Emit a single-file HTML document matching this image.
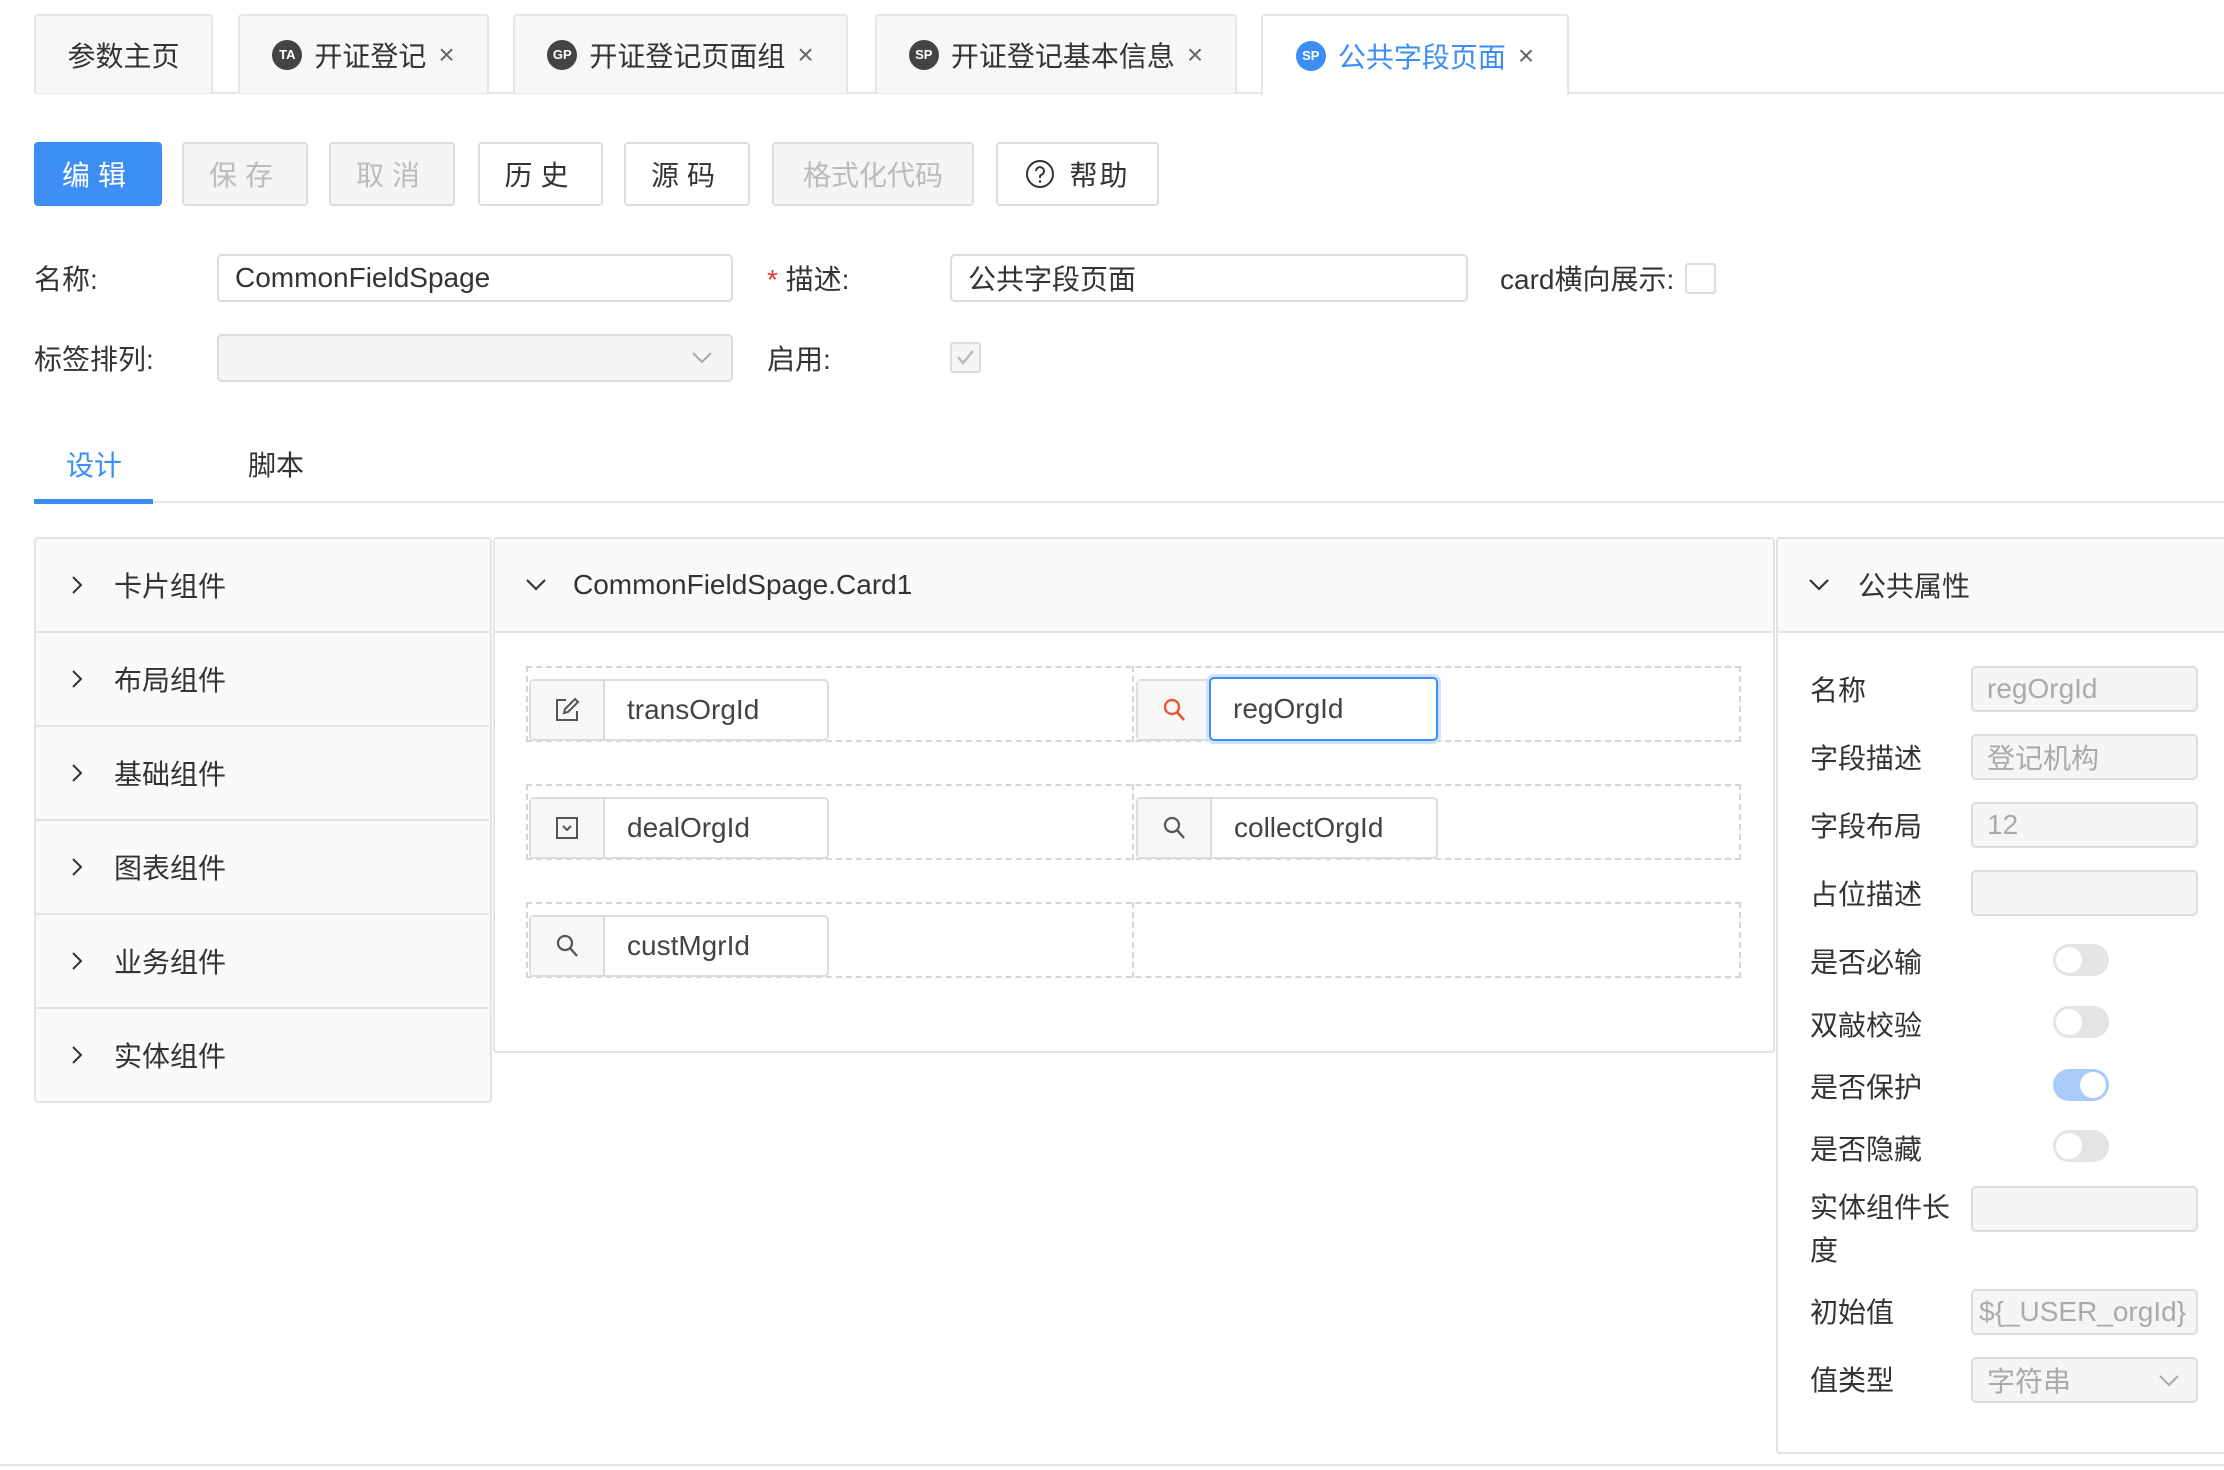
<!DOCTYPE html>
<html><head><meta charset="utf-8"><style>
*{box-sizing:border-box;margin:0;padding:0}
body{width:2224px;height:1470px;background:#fff;position:relative;overflow:hidden;font-family:"Liberation Sans","Noto Sans CJK SC",sans-serif;color:#333;font-size:28px}
.a{position:absolute}
.tab{position:absolute;top:14px;height:79px;border:2px solid #e6e6e6;border-bottom:none;background:#f7f7f7;border-radius:4px 4px 0 0;display:flex;align-items:center;justify-content:center;gap:12px;color:#333;font-size:28px}
.tab.on{background:#fff;color:#3a8ef6;height:81px}
.ic{width:30px;height:30px;border-radius:50%;background:#444;color:#fff;font-size:13px;font-weight:bold;display:flex;align-items:center;justify-content:center}
.x{color:#666;font-size:28px;font-weight:300}
.btn{position:absolute;top:142px;height:64px;border:2px solid #dcdcdc;border-radius:4px;background:#fff;display:flex;align-items:center;justify-content:center;font-size:28px;letter-spacing:8px;color:#333}
.btn.dis{background:#f5f5f5;color:#bbb}
.inp{position:absolute;border:2px solid #dcdcdc;border-radius:5px;background:#fff;display:flex;align-items:center;padding-left:16px;font-size:28px;color:#333}
.lbl{position:absolute;font-size:28px;color:#333}
.lrow{position:absolute;left:36px;width:453px;height:94px;border-bottom:2px solid #e3e3e3;background:#fafafa;display:flex;align-items:center;padding-left:34px;font-size:28px}
.lrow svg{margin-right:30px}
.dash{position:absolute;border:2px dashed #d6d6d6}
.grp{position:absolute;height:62px;border:2px solid #dcdcdc;border-radius:5px;background:#fff;display:flex;align-items:center}
.grp .ad{width:74px;height:100%;background:#f7f7f7;border-right:2px solid #dcdcdc;display:flex;align-items:center;justify-content:center}
.grp .t{padding-left:22px;font-size:28px;color:#444}
.rl{position:absolute;left:1810px;font-size:28px;color:#333}
.ri{position:absolute;left:1971px;width:227px;height:46px;border:2px solid #dcdcdc;border-radius:5px;background:#f5f5f5;color:#aaa;font-size:28px;display:flex;align-items:center;padding-left:14px;overflow:hidden;white-space:nowrap}
.tg{position:absolute;left:2053px;width:56px;height:32px;border-radius:16px;background:#e4e4e4}
.tg::after{content:"";position:absolute;left:3px;top:3px;width:26px;height:26px;border-radius:50%;background:#fff}
.tg.on{background:#a9cbf7}
.tg.on::after{left:27px}
</style></head><body>
<div class="a" style="left:34px;top:92px;width:2190px;height:2px;background:#e6e6e6"></div>
<div class="tab" style="left:34px;width:179px">参数主页</div>
<div class="tab" style="left:238px;width:251px"><span class="ic">TA</span>开证登记<span class="x">×</span></div>
<div class="tab" style="left:513px;width:335px"><span class="ic">GP</span>开证登记页面组<span class="x">×</span></div>
<div class="tab" style="left:875px;width:362px"><span class="ic">SP</span>开证登记基本信息<span class="x">×</span></div>
<div class="tab on" style="left:1261px;width:308px"><span class="ic" style="background:#3a8ef6">SP</span>公共字段页面<span class="x">×</span></div>

<div class="btn" style="left:34px;width:128px;background:#3e8ff5;border-color:#3e8ff5;color:#fff">编辑</div>
<div class="btn dis" style="left:182px;width:126px">保存</div>
<div class="btn dis" style="left:329px;width:126px">取消</div>
<div class="btn" style="left:478px;width:125px">历史</div>
<div class="btn" style="left:624px;width:126px">源码</div>
<div class="btn dis" style="left:772px;width:202px;letter-spacing:0">格式化代码</div>
<div class="btn" style="left:996px;width:163px;letter-spacing:2px"><svg width="30" height="30" viewBox="0 0 30 30" style="margin-right:14px"><circle cx="15" cy="15" r="13" fill="none" stroke="#333" stroke-width="2"/><path d="M11 12a4 4 0 1 1 5 4c-1 .5-1 1-1 3" fill="none" stroke="#333" stroke-width="2"/><circle cx="15" cy="22.5" r="1.3" fill="#333"/></svg>帮助</div>

<div class="lbl" style="left:34px;top:258px">名称:</div>
<div class="inp" style="left:217px;top:254px;width:516px;height:48px">CommonFieldSpage</div>
<div class="lbl" style="left:767px;top:258px"><span style="color:#e33">*</span> 描述:</div>
<div class="inp" style="left:950px;top:254px;width:518px;height:48px">公共字段页面</div>
<div class="lbl" style="left:1500px;top:258px">card横向展示:</div>
<div class="a" style="left:1685px;top:263px;width:31px;height:31px;border:2px solid #dcdcdc;border-radius:3px"></div>
<div class="lbl" style="left:34px;top:338px">标签排列:</div>
<div class="inp" style="left:217px;top:334px;width:516px;height:48px;background:#f5f5f5"><svg class="a" style="right:18px;top:14px" width="22" height="16" viewBox="0 0 22 16"><path d="M2 3l9 9 9-9" fill="none" stroke="#aaa" stroke-width="2"/></svg></div>
<div class="lbl" style="left:767px;top:338px">启用:</div>
<div class="a" style="left:950px;top:342px;width:31px;height:31px;border:2px solid #dcdcdc;border-radius:3px;background:#f5f5f5"><svg width="27" height="27" viewBox="0 0 27 27"><path d="M6 13l5 6 10-12" fill="none" stroke="#bbb" stroke-width="2.5"/></svg></div>

<div class="a" style="left:66px;top:444px;font-size:28px;color:#3a8ef6">设计</div>
<div class="a" style="left:248px;top:444px;font-size:28px;color:#333">脚本</div>
<div class="a" style="left:34px;top:501px;width:2190px;height:2px;background:#e6e6e6"></div>
<div class="a" style="left:34px;top:499px;width:119px;height:5px;background:#3a8ef6"></div>

<!-- left panel -->
<div class="a" style="left:34px;top:537px;width:458px;height:566px;border:2px solid #e3e3e3;border-radius:4px;background:#fafafa"></div>
<div class="lrow" style="top:539px"><svg width="14" height="24" viewBox="0 0 14 24"><path d="M3 4l8 8-8 8" fill="none" stroke="#333" stroke-width="2"/></svg>卡片组件</div>
<div class="lrow" style="top:633px"><svg width="14" height="24" viewBox="0 0 14 24"><path d="M3 4l8 8-8 8" fill="none" stroke="#333" stroke-width="2"/></svg>布局组件</div>
<div class="lrow" style="top:727px"><svg width="14" height="24" viewBox="0 0 14 24"><path d="M3 4l8 8-8 8" fill="none" stroke="#333" stroke-width="2"/></svg>基础组件</div>
<div class="lrow" style="top:821px"><svg width="14" height="24" viewBox="0 0 14 24"><path d="M3 4l8 8-8 8" fill="none" stroke="#333" stroke-width="2"/></svg>图表组件</div>
<div class="lrow" style="top:915px"><svg width="14" height="24" viewBox="0 0 14 24"><path d="M3 4l8 8-8 8" fill="none" stroke="#333" stroke-width="2"/></svg>业务组件</div>
<div class="lrow" style="top:1009px;border-bottom:none;height:92px"><svg width="14" height="24" viewBox="0 0 14 24"><path d="M3 4l8 8-8 8" fill="none" stroke="#333" stroke-width="2"/></svg>实体组件</div>

<!-- center panel -->
<div class="a" style="left:493px;top:537px;width:1282px;height:516px;border:2px solid #e3e3e3;border-radius:4px;background:#fff"></div>
<div class="a" style="left:495px;top:539px;width:1278px;height:94px;background:#fafafa;border-bottom:2px solid #e3e3e3;display:flex;align-items:center;padding-left:30px;font-size:28px"><svg width="22" height="16" viewBox="0 0 22 16" style="margin-right:26px"><path d="M2 3l9 9 9-9" fill="none" stroke="#333" stroke-width="2.2"/></svg>CommonFieldSpage.Card1</div>
<div class="dash" style="left:526px;top:666px;width:1215px;height:76px"></div>
<div class="dash" style="left:526px;top:784px;width:1215px;height:76px"></div>
<div class="dash" style="left:526px;top:902px;width:1215px;height:76px"></div>
<div class="a" style="left:1132px;top:666px;height:76px;border-left:2px dashed #d6d6d6"></div>
<div class="a" style="left:1132px;top:784px;height:76px;border-left:2px dashed #d6d6d6"></div>
<div class="a" style="left:1132px;top:902px;height:76px;border-left:2px dashed #d6d6d6"></div>

<div class="grp" style="left:529px;top:679px;width:300px"><div class="ad"><svg width="28" height="28" viewBox="0 0 28 28"><path d="M13 4H4v20h20v-9" fill="none" stroke="#555" stroke-width="2"/><path d="M11 17l1-4 10-10 3 3-10 10z" fill="none" stroke="#555" stroke-width="2"/></svg></div><span class="t">transOrgId</span></div>
<div class="grp" style="left:1136px;top:679px;width:302px"><div class="ad"><svg width="28" height="28" viewBox="0 0 28 28"><circle cx="12" cy="11" r="7" fill="none" stroke="#e53" stroke-width="2.4"/><path d="M17 16l7 8" stroke="#e53" stroke-width="2.6"/></svg></div></div>
<div class="a" style="left:1209px;top:677px;width:229px;height:64px;border:2px solid #3a8ef6;border-radius:5px;box-shadow:0 0 0 3px #cfe2fc;background:#fff;display:flex;align-items:center;padding-left:22px;font-size:28px;color:#444">regOrgId</div>
<div class="grp" style="left:529px;top:797px;width:300px"><div class="ad"><svg width="28" height="28" viewBox="0 0 28 28"><rect x="4" y="4" width="20" height="20" fill="none" stroke="#555" stroke-width="2"/><path d="M10 12l4 4 4-4" fill="none" stroke="#555" stroke-width="2"/></svg></div><span class="t">dealOrgId</span></div>
<div class="grp" style="left:1136px;top:797px;width:302px"><div class="ad"><svg width="28" height="28" viewBox="0 0 28 28"><circle cx="12" cy="11" r="7" fill="none" stroke="#555" stroke-width="2.2"/><path d="M17 16l7 8" stroke="#555" stroke-width="2.4"/></svg></div><span class="t">collectOrgId</span></div>
<div class="grp" style="left:529px;top:915px;width:300px"><div class="ad"><svg width="28" height="28" viewBox="0 0 28 28"><circle cx="12" cy="11" r="7" fill="none" stroke="#555" stroke-width="2.2"/><path d="M17 16l7 8" stroke="#555" stroke-width="2.4"/></svg></div><span class="t">custMgrId</span></div>

<!-- right panel -->
<div class="a" style="left:1776px;top:537px;width:460px;height:917px;border:2px solid #e3e3e3;border-radius:4px;background:#fff"></div>
<div class="a" style="left:1778px;top:539px;width:446px;height:94px;background:#fafafa;border-bottom:2px solid #e3e3e3;display:flex;align-items:center;padding-left:30px;font-size:28px"><svg width="22" height="16" viewBox="0 0 22 16" style="margin-right:28px"><path d="M2 3l9 9 9-9" fill="none" stroke="#333" stroke-width="2.2"/></svg>公共属性</div>
<div class="rl" style="top:669px">名称</div><div class="ri" style="top:666px">regOrgId</div>
<div class="rl" style="top:737px">字段描述</div><div class="ri" style="top:734px">登记机构</div>
<div class="rl" style="top:805px">字段布局</div><div class="ri" style="top:802px">12</div>
<div class="rl" style="top:873px">占位描述</div><div class="ri" style="top:870px"></div>
<div class="rl" style="top:941px">是否必输</div><div class="tg" style="top:944px"></div>
<div class="rl" style="top:1004px">双敲校验</div><div class="tg" style="top:1006px"></div>
<div class="rl" style="top:1066px">是否保护</div><div class="tg on" style="top:1069px"></div>
<div class="rl" style="top:1128px">是否隐藏</div><div class="tg" style="top:1130px"></div>
<div class="rl" style="top:1186px;line-height:43px;width:150px">实体组件长度</div><div class="ri" style="top:1186px"></div>
<div class="rl" style="top:1291px">初始值</div><div class="ri" style="top:1289px;padding-left:6px">${_USER_orgId}</div>
<div class="rl" style="top:1359px">值类型</div><div class="ri" style="top:1357px">字符串<svg class="a" style="right:16px;top:14px" width="22" height="16" viewBox="0 0 22 16"><path d="M2 3l9 9 9-9" fill="none" stroke="#aaa" stroke-width="2"/></svg></div>
<div class="a" style="left:0;top:1464px;width:2224px;height:2px;background:#e6e6e6"></div>
</body></html>
